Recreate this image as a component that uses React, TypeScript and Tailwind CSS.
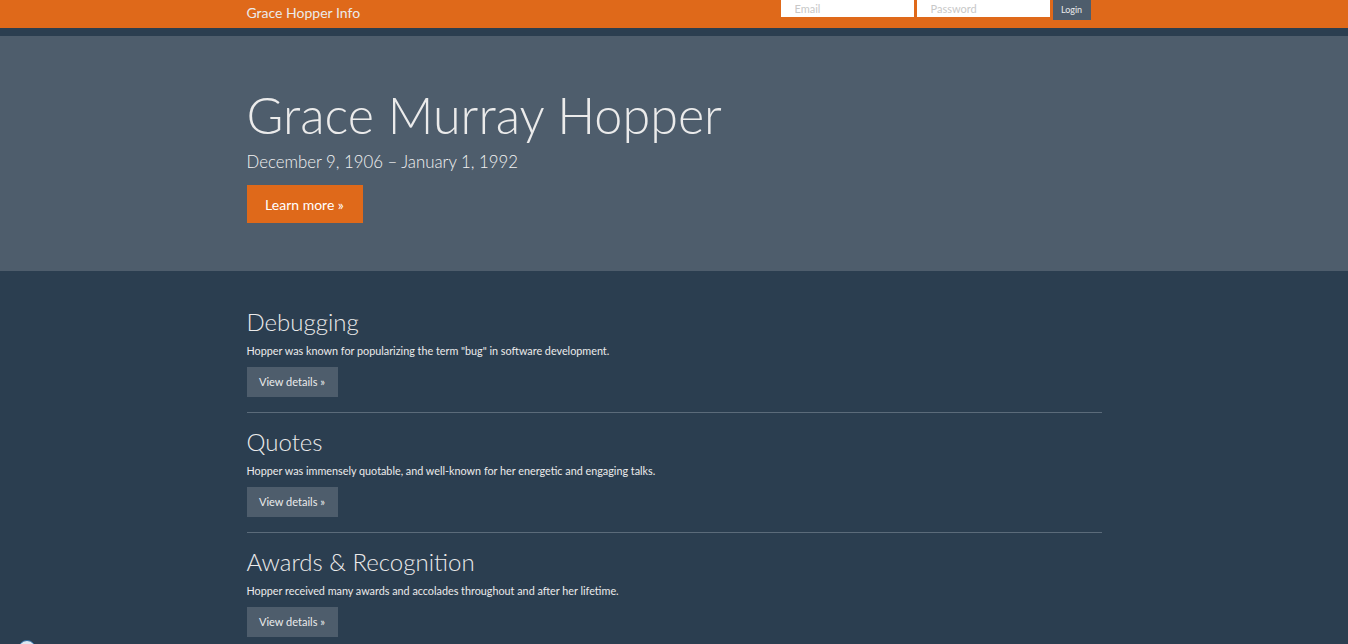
import React from "react";

const sections = [
  {
    title: "Debugging",
    text: 'Hopper was known for popularizing the term "bug" in software development.',
  },
  {
    title: "Quotes",
    text: "Hopper was immensely quotable, and well-known for her energetic and engaging talks.",
  },
  {
    title: "Awards & Recognition",
    text: "Hopper received many awards and accolades throughout and after her lifetime.",
  },
];

export default function App() {
  return (
    <div
      className="min-h-[644px] bg-[#2b3e50] text-[#ebebeb] relative overflow-hidden"
      style={{ fontFamily: "Lato, 'Open Sans', sans-serif" }}
    >
      {/* Navbar */}
      <nav className="h-[28px] bg-[#df691a]">
        <div className="mx-auto w-[885px] px-[15px] h-full flex justify-between items-start">
          <a className="text-[14px] leading-[26px] text-[#ebebeb] font-normal">Grace Hopper Info</a>
          <form className="flex items-start gap-[3px] mr-[11px]">
            <input
              placeholder="Email"
              className="w-[133px] h-[17px] bg-white px-[14px] text-[11px] text-[#333] placeholder:text-[#c8c8c8] outline-none"
            />
            <input
              placeholder="Password"
              className="w-[133px] h-[17px] bg-white px-[14px] text-[11px] text-[#333] placeholder:text-[#c8c8c8] outline-none"
            />
            <button
              type="button"
              className="w-[38px] h-[20px] bg-[#4e5d6c] text-[9px] text-[#ebebeb] leading-[20px]"
            >
              Login
            </button>
          </form>
        </div>
      </nav>
      <div className="h-[8px]" />

      {/* Jumbotron */}
      <div className="bg-[#4e5d6c] h-[235px]">
        <div className="mx-auto w-[885px] px-[15px] pt-[51px]">
          <h1 className="text-[50.3px] leading-[1.1] font-light text-[#ebebeb]">Grace Murray Hopper</h1>
          <p className="text-[16.8px] font-light leading-[24px] mt-[8px] text-[#f2f2f2]">
            December 9, 1906 – January 1, 1992
          </p>
          <button
            type="button"
            className="mt-[11px] w-[116px] h-[38px] bg-[#df691a] text-[14px] text-white"
          >
            Learn more »
          </button>
        </div>
      </div>

      {/* Sections */}
      <div className="mx-auto w-[885px] px-[15px] pt-[36px]">
        {sections.map((s, i) => (
          <div key={s.title}>
            {i > 0 && <hr className="border-0 border-t border-[#5b6b7a] mt-[15px] mb-[14px]" />}
            <h2 className="text-[24px] font-light leading-[30px]">{s.title}</h2>
            <p className="text-[10.8px] leading-[16px] mt-[6px]">{s.text}</p>
            <button
              type="button"
              className="mt-[8px] w-[91px] h-[30px] bg-[#4e5d6c] text-[11px] text-[#ebebeb]"
            >
              View details »
            </button>
          </div>
        ))}
      </div>

      <div className="absolute left-[18px] top-[640px] w-[18px] h-[18px] rounded-full bg-[#dce8f2] border border-[#2d6aa0]" />
    </div>
  );
}
